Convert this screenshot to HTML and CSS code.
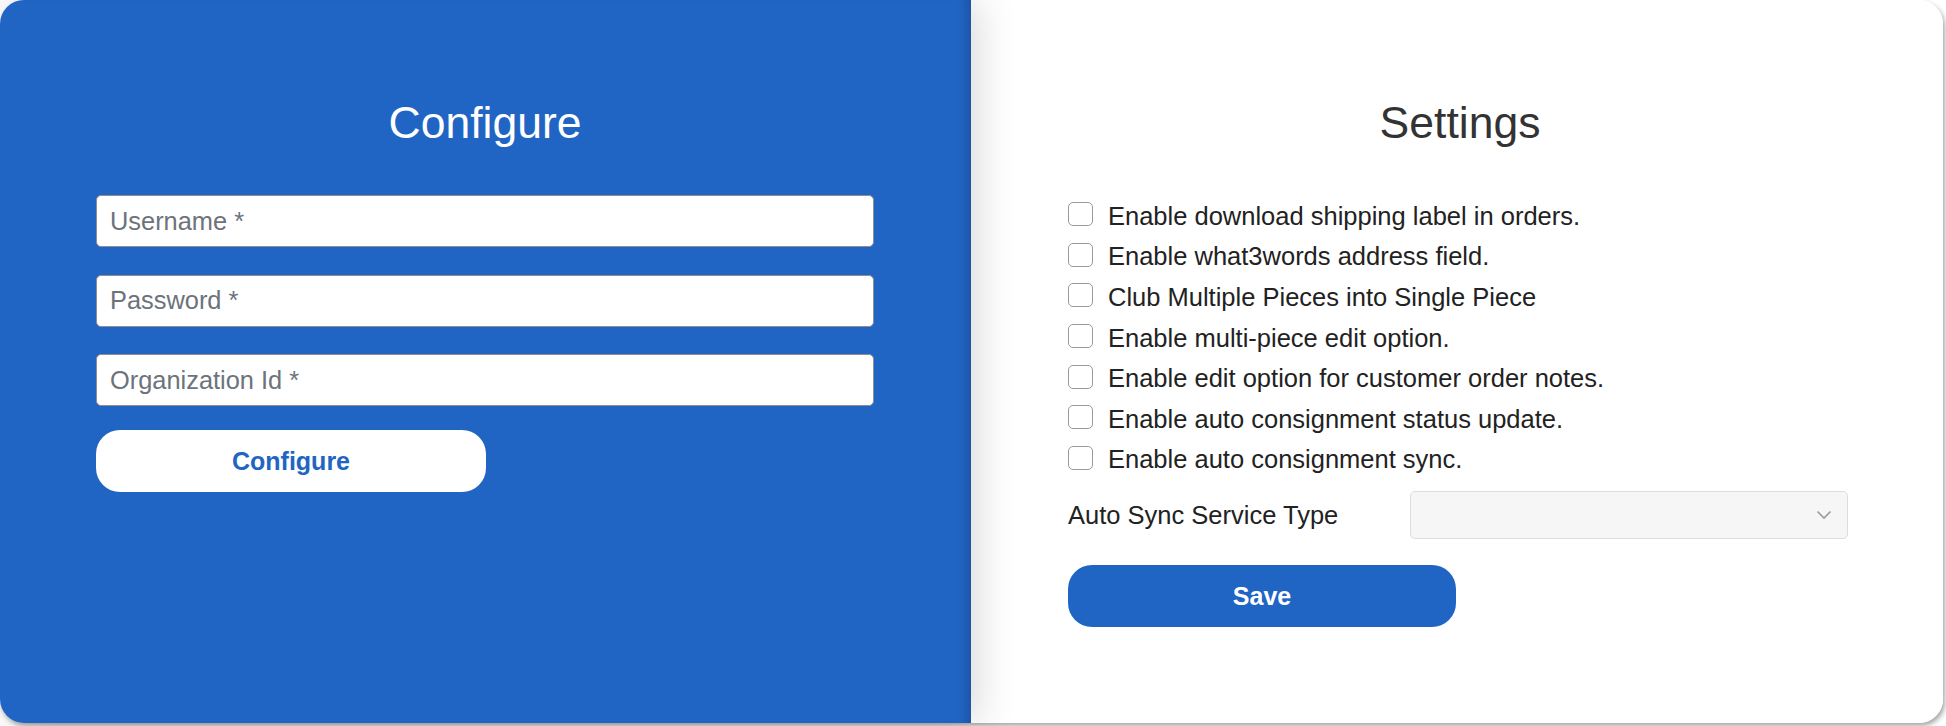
FILE: index.html
```html
<!DOCTYPE html>
<html lang="en">
<head>
<meta charset="utf-8">
<title>Configure</title>
<link rel="stylesheet" href="styles.css">
</head>
<body>
<div class="card">
  <section class="panel panel-config">
    <h1 class="title title-light">Configure</h1>
    <form class="config-form">
      <input class="text-input" type="text" placeholder="Username *">
      <input class="text-input" type="password" placeholder="Password *">
      <input class="text-input" type="text" placeholder="Organization Id *">
      <button type="button" class="btn btn-white">Configure</button>
    </form>
  </section>
  <section class="panel panel-settings">
    <h1 class="title title-dark">Settings</h1>
    <div class="settings-form">
      <ul class="check-list">
        <li class="check-row"><span class="checkbox"></span><span>Enable download shipping label in orders.</span></li>
        <li class="check-row"><span class="checkbox"></span><span>Enable what3words address field.</span></li>
        <li class="check-row"><span class="checkbox"></span><span>Club Multiple Pieces into Single Piece</span></li>
        <li class="check-row"><span class="checkbox"></span><span>Enable multi-piece edit option.</span></li>
        <li class="check-row"><span class="checkbox"></span><span>Enable edit option for customer order notes.</span></li>
        <li class="check-row"><span class="checkbox"></span><span>Enable auto consignment status update.</span></li>
        <li class="check-row"><span class="checkbox"></span><span>Enable auto consignment sync.</span></li>
      </ul>
      <div class="select-row">
        <span class="select-label">Auto Sync Service Type</span>
        <div class="select-box">
          <svg class="chevron" width="16" height="10" viewBox="0 0 16 10"><path d="M1.5 1.5 L8 8 L14.5 1.5" fill="none" stroke="#9a9a9a" stroke-width="1.6"/></svg>
        </div>
      </div>
      <button type="button" class="btn btn-blue">Save</button>
    </div>
  </section>
</div>
</body>
</html>
```
FILE: styles.css
```css
* { box-sizing: border-box; }
html, body { margin: 0; padding: 0; }
body {
  background: #ffffff;
  font-family: "Liberation Sans", Arial, sans-serif;
  width: 1946px;
  height: 726px;
  overflow: hidden;
}
.card {
  width: 1943px;
  height: 723px;
  display: flex;
  border-radius: 24px;
  background: #ffffff;
  box-shadow: 2px 3px 5px rgba(0, 0, 0, 0.35);
}
.panel {
  height: 100%;
  padding-top: 101px;
}
.panel-config {
  width: 971px;
  flex: none;
  background: #2165c4;
  border-radius: 24px 0 0 24px;
  padding-left: 96px;
  padding-right: 97px;
  position: relative;
  z-index: 1;
  box-shadow: 6px 0 40px rgba(0, 0, 0, 0.16), inset -14px 0 14px -12px rgba(0, 0, 0, 0.25);
}
.panel-settings {
  flex: 1;
  background: #ffffff;
  border-radius: 0 24px 24px 0;
  padding-left: 97px;
  padding-right: 91px;
}
.title {
  margin: 0;
  font-size: 44.5px;
  line-height: 44px;
  font-weight: 400;
  text-align: center;
}
.title-light { color: #ffffff; }
.title-dark { color: #333333; }
.config-form {
  margin-top: 50px;
  display: flex;
  flex-direction: column;
  gap: 27.5px;
  align-items: flex-start;
}
.text-input {
  width: 778px;
  height: 52px;
  border: 1px solid #8f8f8f;
  border-radius: 5px;
  background: #ffffff;
  padding: 0 13px;
  font-family: inherit;
  font-size: 25.4px;
  color: #333;
  outline: none;
}
.text-input::placeholder { color: #6c737b; }
.btn {
  width: 390px;
  height: 62px;
  border: none;
  border-radius: 24px;
  font-family: inherit;
  font-size: 25px;
  font-weight: 700;
  cursor: pointer;
}
.btn-white {
  margin-top: -3.5px;
  background: #ffffff;
  color: #2165c4;
}
.btn-blue {
  width: 388px;
  background: #2165c4;
  color: #ffffff;
  margin-top: 26px;
}
.settings-form {
  margin-top: 50px;
}
.check-list {
  list-style: none;
  margin: 0;
  padding: 0;
}
.check-row {
  height: 40.6px;
  display: flex;
  align-items: center;
  gap: 15px;
  font-size: 25.5px;
  color: #222222;
  padding-top: 2px;
}
.checkbox {
  width: 25px;
  height: 24px;
  border: 1.5px solid #9a9a9a;
  border-radius: 5px;
  background: #ffffff;
  flex: none;
  margin-top: -4px;
}
.select-row {
  margin-top: 12px;
  display: grid;
  grid-template-columns: 342px 438px;
  align-items: center;
}
.select-label {
  font-size: 25.5px;
  color: #222222;
}
.select-box {
  height: 48px;
  background: #f5f6f5;
  border: 1px solid #dcdddc;
  border-radius: 5px;
  display: flex;
  align-items: center;
  justify-content: flex-end;
  padding-right: 15px;
}
.chevron { display: block; }
```
